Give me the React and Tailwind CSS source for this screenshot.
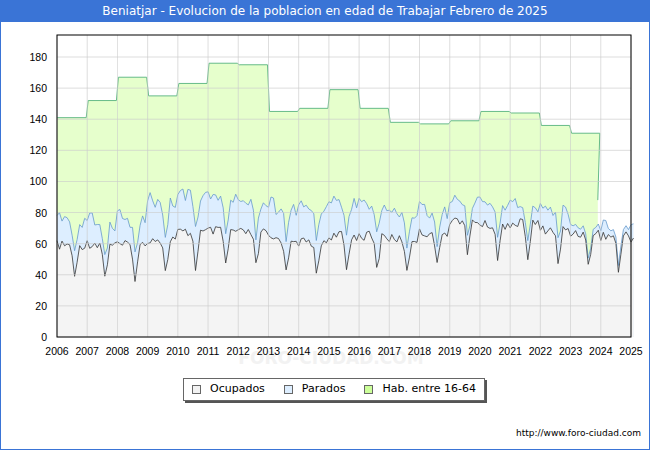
import React from 'react';

const X0 = 56, X1 = 630, YT = 35, YB = 337;
const sx = (t) => X0 + (t - 2006) * ((X1 - X0) / 19);
const sy = (v) => YB - v * (280 / 180);

const hab = [141, 152, 167, 155, 163, 176, 175, 145, 147, 159, 147, 138, 137, 139, 145, 144, 136, 131];
const occBase = [62, 63, 62, 66, 70, 71, 70, 66, 64, 68, 68, 66, 70, 78, 75, 76, 72, 70, 68, 66];
const totBase = [78, 76, 78, 90, 95, 92, 90, 86, 86, 90, 88, 82, 84, 90, 88, 86, 86, 72, 72, 74];

function rnd(i) {
  const x = Math.sin(i * 12.9898) * 43758.5453;
  return x - Math.floor(x);
}

const pts = [];
for (let i = 0; i <= 19 * 12 + 1; i++) {
  const y = Math.floor(i / 12);
  const m = i % 12;
  const dip = m === 7 ? 22 : m === 8 ? 12 : m === 6 ? 6 : 0;
  const o = occBase[y] - dip - rnd(i) * 6;
  const t = totBase[y] - dip * 0.9 - rnd(i + 99) * 8 + (m < 3 ? 4 : 0);
  pts.push({ t: 2006 + i / 12, o, tot: Math.max(t, o + 4) });
}

const area = (key) => {
  const line = pts.map((p) => `${sx(p.t).toFixed(1)},${sy(p[key]).toFixed(1)}`).join(' L');
  return { line: 'M' + line, fill: `M${sx(2006)},${YB} L${line} L${sx(pts[pts.length - 1].t)},${YB} Z` };
};

let habLine = `M${sx(2006)},${sy(hab[0])}`;
hab.forEach((v, i) => {
  habLine += ` L${sx(2006 + i) + 1},${sy(v)} L${sx(2007 + i) - 1},${sy(v)}`;
});
habLine += ` L${sx(2024) - 3},${sy(88)}`;
const habFill = habLine + ` L${sx(2024) - 3},${YB} L${sx(2006)},${YB} Z`;

const tot = area('tot');
const occ = area('o');

export default function App() {
  return (
    <div className="w-[650px] h-[450px] bg-white border-x border-b border-[#3a74d6] relative" style={{ fontFamily: '"DejaVu Sans", sans-serif' }}>
      <div className="h-[22px] bg-[#3a74d6] text-white text-[12px] flex items-center justify-center">
        Beniatjar - Evolucion de la poblacion en edad de Trabajar Febrero de 2025
      </div>
      <svg width="648" height="345" viewBox="0 22 648 345" className="block">
        <rect x={X0} y={YT} width={X1 - X0} height={YB - YT} fill="white" />
        <path d={habFill} fill="#e6ffcc" />
        <path d={habLine} fill="none" stroke="#66bb88" strokeWidth="1" />
        <path d={tot.fill} fill="#ddeeff" />
        <path d={tot.line} fill="none" stroke="#6699cc" strokeWidth="0.8" />
        <path d={occ.fill} fill="#f4f4f4" />
        <path d={occ.line} fill="none" stroke="#333" strokeWidth="0.8" />
        <text x="330" y="364" fontSize="17" textAnchor="middle" fill="#f2f2f2" fontWeight="bold">FORO-CIUDAD.COM</text>
        {Array.from({ length: 20 }, (_, i) => (
          <g key={i}>
            <line x1={sx(2006 + i)} x2={sx(2006 + i)} y1={YT} y2={YB} stroke="#ccc" strokeWidth="0.8" opacity="0.8" />
            <text x={sx(2006 + i)} y={355} fontSize="10.5" textAnchor="middle" fill="#000" style={{ fontFamily: '"Liberation Sans", sans-serif' }}>{2006 + i}</text>
          </g>
        ))}
        {Array.from({ length: 10 }, (_, i) => (
          <g key={i}>
            <line x1={X0} x2={X1} y1={sy(i * 20)} y2={sy(i * 20)} stroke="#ccc" strokeWidth="0.8" opacity="0.8" />
            <text x={X0 - 10} y={sy(i * 20) + 4} fontSize="10.5" textAnchor="end" fill="#000" style={{ fontFamily: '"Liberation Sans", sans-serif' }}>{i * 20}</text>
          </g>
        ))}
        <rect x={X0} y={YT} width={X1 - X0} height={YB - YT} fill="none" stroke="#000" strokeWidth="1" />
      </svg>
      <div className="flex pl-[182px] mt-[11px]">
        <div className="flex items-center gap-[5px] h-[23px] px-[8px] border border-[#666] shadow-[2px_2px_0_#555] text-[11px] text-black bg-white">
          <span className="w-[9px] h-[9px] border border-[#666] bg-[#f2f2f2]" />
          <span className="mr-[14px] ml-[4px]">Ocupados</span>
          <span className="w-[9px] h-[9px] border border-[#666] bg-[#ddeeff]" />
          <span className="mr-[14px] ml-[4px]">Parados</span>
          <span className="w-[9px] h-[9px] border border-[#666] bg-[#ccff99]" />
          <span className="ml-[4px]">Hab. entre 16-64</span>
        </div>
      </div>
      <div className="text-right pr-[8px] mt-[26px] text-[9px] text-black">http://www.foro-ciudad.com</div>
    </div>
  );
}
